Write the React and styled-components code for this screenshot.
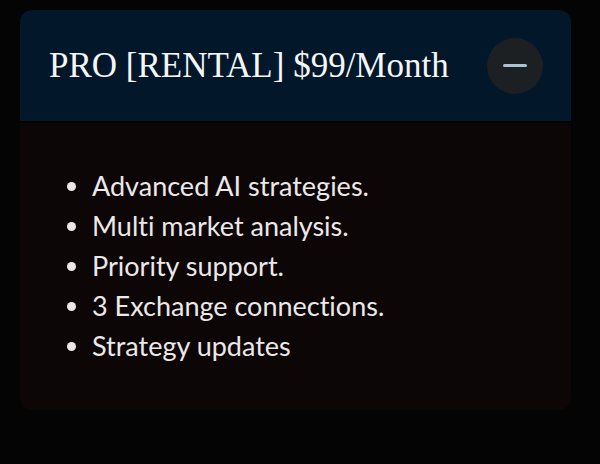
import React, { useState } from 'react';
import styled, { createGlobalStyle } from 'styled-components';

const GlobalStyle = createGlobalStyle`
   html, body {
      margin: 0;
      padding: 0;
      background: #050404;
   }
   body {
      width: 600px;
      height: 464px;
      overflow: hidden;
   }
`;

const features = [
   'Advanced AI strategies.',
   'Multi market analysis.',
   'Priority support.',
   '3 Exchange connections.',
   'Strategy updates',
];

const App = () => {
   const [open, setOpen] = useState(true);

   return (
      <Page>
         <GlobalStyle />
         <Card>
            <Header>
               <Title>PRO [RENTAL] $99/Month</Title>
               <ToggleButton onClick={() => setOpen(!open)} aria-label="toggle">
                  <Bar />
               </ToggleButton>
            </Header>
            <Body isOpen={open}>
               <FeatureList>
                  {features.map((f) => (
                     <Feature key={f}>{f}</Feature>
                  ))}
               </FeatureList>
            </Body>
         </Card>
      </Page>
   );
};

/* Styles */
const Page = styled.main`
   padding: 10px 29px 0 20px;
`;

const Card = styled.section`
   display: flex;
   flex-direction: column;
   gap: 2px;
   border-radius: 12px;
   overflow: hidden;
   background: #040303;
`;

const Header = styled.header`
   height: 111px;
   display: flex;
   align-items: center;
   justify-content: space-between;
   padding: 0 28px 0 29px;
   background: #03172a;
`;

const Title = styled.h2`
   margin: 0;
   font-family: "Liberation Serif", "DejaVu Serif", serif;
   font-weight: 400;
   font-size: 35px;
   color: #f4f6f8;
`;

const ToggleButton = styled.button`
   width: 56px;
   height: 56px;
   border-radius: 50%;
   border: none;
   background: #1d2023;
   display: flex;
   align-items: center;
   justify-content: center;
   cursor: pointer;
   padding: 0;
`;

const Bar = styled.span`
   display: block;
   width: 24px;
   height: 3px;
   border-radius: 2px;
   background: #a9c3d1;
`;

const Body = styled.div`
   display: ${props => props.isOpen ? 'block' : 'none'};
   height: 287px;
   background: #0d0607;
   padding: 43px 0 0 50px;
   box-sizing: border-box;
`;

const FeatureList = styled.ul`
   margin: 0;
   padding: 0 0 0 22px;
   font-family: Lato, "Open Sans", sans-serif;
   font-size: 27px;
   line-height: 40px;
   font-variant-ligatures: none;
   color: #ece8e8;
`;

const Feature = styled.li`
   padding-left: 0;
`;

export default App;
